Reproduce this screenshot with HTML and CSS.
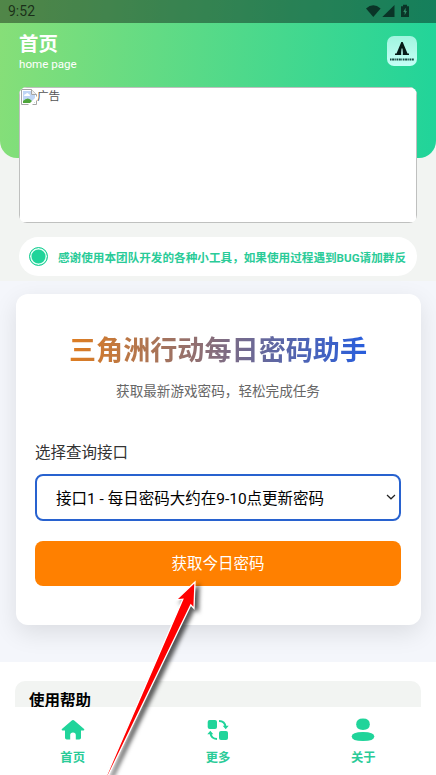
FILE: index.html
```html
<!DOCTYPE html>
<html lang="zh-CN">
<head>
<meta charset="utf-8">
<title>首页</title>
<link rel="stylesheet" href="styles.css">
</head>
<body>
<div class="screen">
  <div class="status">
    <span>9:52</span>
    <svg class="status-icons" width="44" height="14" viewBox="0 0 44 14">
      <path d="M0 4.500Q7.300-1.900 14.600 4.500L7.300 13Z"/>
      <path d="M28.500 1V13H16.300Z"/>
      <path d="M37 .8h4v1.400h2V13h-8V2.200h2Z"/>
      <path class="bolt" d="M39.600 3.800 37.300 8h1.400v3.200L40.900 7h-1.300Z"/>
    </svg>
  </div>
  <main class="content">
    <section class="intro">
      <header class="hero">
        <div>
          <h1>首页</h1>
          <p>home page</p>
        </div>
        <svg class="logo" width="30" height="30" viewBox="0 0 30 30">
          <defs><linearGradient id="logo-bg" x2="0" y2="1"><stop stop-color="#a0f5df"/><stop offset="1" stop-color="#c5fff6"/></linearGradient></defs>
          <rect width="30" height="30" rx="7" fill="url(#logo-bg)"/>
          <path d="M14.300 6h1.400l4.800 11.500H22V19h-6.200v-1.500l-.8-5-.8 5V19H8v-1.500h1.500Z" fill="#061b17"/>
          <path d="M15 12.500v5" stroke="#c5fff6" stroke-width=".9"/>
          <path d="M3 23.500h24" stroke="#17483f" stroke-width="1.800" stroke-dasharray="1.500 .6 2.200 .5 1 .7"/>
        </svg>
      </header>
      <div class="banner">
        <div class="ad">
          <svg width="16" height="16" viewBox="0 0 16 16">
            <path d="M.5.5h10l5 5v10H.5Z" fill="#fff" stroke="#a5a5a5"/>
            <path d="M2 2h8v4h4v8H2Z" fill="#bfd5f5"/>
            <path d="M3 7q0-2 2-2 1-2 2.700 0Q9 5 9 7Z" fill="#fff"/>
            <path d="M2 14v-2q5-5 9 0l3 2Z" fill="#4ea63b"/>
            <path d="M10.500.5v5h5" fill="#eee" stroke="#a5a5a5"/>
            <path d="m7 16 9-9v4l-5 5Z" fill="#fff"/>
          </svg>
          <span>广告</span>
        </div>
      </div>
      <div class="notice"><i class="dot"></i><span>感谢使用本团队开发的各种小工具，如果使用过程遇到BUG请加群反</span></div>
    </section>
    <section class="tool">
      <div class="card">
        <h2>三角洲行动每日密码助手</h2>
        <p class="sub">获取最新游戏密码，轻松完成任务</p>
        <div class="label">选择查询接口</div>
        <div class="select">
          <span>接口1 - 每日密码大约在9-10点更新密码</span>
          <svg width="10" height="6" viewBox="0 0 10 6"><path d="m1 1 4 3.800L9 1" fill="none" stroke="#222" stroke-width="1.200"/></svg>
        </div>
        <button class="fetch">获取今日密码</button>
      </div>
    </section>
    <section class="help"><h3>使用帮助</h3></section>
  </main>
  <nav class="tabs">
    <a class="tab">
      <svg width="24" height="24" viewBox="0 0 24 24"><path d="M10.500 2.700q1.500-1.300 3 0l9.300 8q1.300 1.500-.5 1.800H20v7.200q0 1.800-1.800 1.800h-3.400V17q0-2.600-2.800-2.600T9.200 17v4.500H5.800Q4 21.500 4 19.700v-7.200H1.700q-1.800-.3-.5-1.800Z"/></svg>
      <span>首页</span>
    </a>
    <a class="tab">
      <svg width="24" height="24" viewBox="0 0 24 24"><rect x="1.700" y="2" width="9.300" height="9" rx="2"/><rect x="13" y="13" width="9" height="9" rx="2"/><path class="curve" d="M13 3q6 0 6.500 6M11 21q-6-.3-6.500-6"/><path d="M16.700 7.700h6l-3 3.600ZM1.300 16.300h6L4.300 12.700Z"/></svg>
      <span>更多</span>
    </a>
    <a class="tab">
      <svg width="24" height="24" viewBox="0 0 24 24"><path d="M5.200 6.300Q5.200.5 12 .5t6.800 5.800Q18.800 12 12 12T5.200 6.300Z"/><path d="M.7 18.500Q.7 14 12 14t11.300 4.500Q23.300 23 12 23T.7 18.500Z"/></svg>
      <span>关于</span>
    </a>
  </nav>
  <svg class="pointer" width="125" height="205" viewBox="90 570 125 205">
    <path d="M195 582 176 600l6.800-.8L105 779h1.500L190.800 605l3.200 3.500Z"/>
  </svg>
</div>
</body>
</html>
```
FILE: styles.css
```css
* { box-sizing: border-box; }
body { margin: 0; font-family: Roboto, "Noto Sans CJK SC", sans-serif; }
h1, h2, h3, p { margin: 0; }
.screen { position: relative; height: 775px; display: flex; flex-direction: column; overflow: hidden; background: #fff; }
.status { position: absolute; z-index: 2; top: 0; left: 0; right: 0; height: 23px; padding: 0 26px 2px 8px; display: flex; justify-content: space-between; align-items: center; background: rgba(0, 0, 0, .4); color: rgba(0, 0, 0, .66); font-size: 14px; line-height: 23px; }
.status span { padding-top: 2px; }
.status-icons { fill: #0a3427; }
.status-icons .bolt { fill: #318d69; }
.content { flex: 1; min-height: 0; overflow: hidden; }
.intro { height: 281px; background: #f2f4f2; }
.hero { height: 158px; padding: 33px 19px 0; display: flex; justify-content: space-between; background: linear-gradient(95deg, #87df78, #20d49a); border-radius: 0 0 17px 17px; color: #fff; }
.hero h1 { font-size: 19.400px; line-height: 23px; }
.hero p { font-size: 11.600px; line-height: 16px; }
.logo { margin-top: 3px; }
.banner { height: 136px; margin: -71px 19px 0; background: #fff; border-radius: 8px; overflow: hidden; position: relative; }
.ad { height: 100%; display: flex; align-items: flex-start; padding: 1px; border: 1px solid #bfc0bf; color: #555; font-size: 11.600px; line-height: 15px; }
.notice { height: 39px; margin: 14px 19px 0; padding-left: 10px; display: flex; align-items: center; gap: 10px; border-radius: 20px; background: #fff; color: #2acb98; font-size: 11.620px; font-weight: 700; white-space: nowrap; }
.dot { width: 19px; height: 19px; flex: none; border: 1px solid #20cf96; border-radius: 50%; background: #20d49a; box-shadow: inset 0 0 0 1.500px #e6fff6; }
.tool { height: 381px; padding: 13px 15.500px 0; background: #f4f6fb; overflow: hidden; }
.card { height: 331px; padding: 37px 19.500px 0; border-radius: 12px; background: #fff; box-shadow: 0 8px 25px rgba(0, 0, 0, .1); }
.card h2 { width: max-content; margin: 0 auto; font-size: 27.100px; line-height: 40px; background: linear-gradient(90deg, #df7d20, #275ddd); background-clip: text; color: transparent; }
.sub { margin-top: 10px; text-align: center; color: #666; font-size: 13.600px; line-height: 20px; }
.label { margin-top: 40px; color: #333; font-size: 15.500px; line-height: 24px; }
.select { height: 47px; margin-top: 9px; padding: 0 3px 2px 19px; display: flex; align-items: center; justify-content: space-between; border: 2px solid #2862cf; border-radius: 8px; color: #000; font-size: 15.500px; }
.fetch { display: block; width: 100%; height: 45px; margin-top: 20px; padding: 0 0 3px; border: 0; border-radius: 8px; background: #ff8000; color: #fff; font: 15.500px Roboto, "Noto Sans CJK SC", sans-serif; }
.help { height: 100px; margin: 19px 15px 0; padding: 8px 14px; border-radius: 10px; background: #f2f4f2; }
.help h3 { font-size: 15.500px; line-height: 24px; color: #000; }
.tabs { height: 68px; flex: none; display: flex; background: #fff; }
.tab { flex: 1; display: flex; flex-direction: column; align-items: center; padding-top: 11px; color: #2acb98; font-size: 12.300px; line-height: 18px; font-weight: 700; }
.tab svg { fill: #20d49a; }
.tab span { margin-top: 7px; }
.curve { fill: none; stroke: #20d49a; stroke-width: 2; }
.pointer { position: absolute; z-index: 3; left: 90px; top: 570px; fill: #f00; stroke: #fff; stroke-width: 1.300px; filter: drop-shadow(4px 3px 2px rgba(0, 0, 0, .65)); }
```
